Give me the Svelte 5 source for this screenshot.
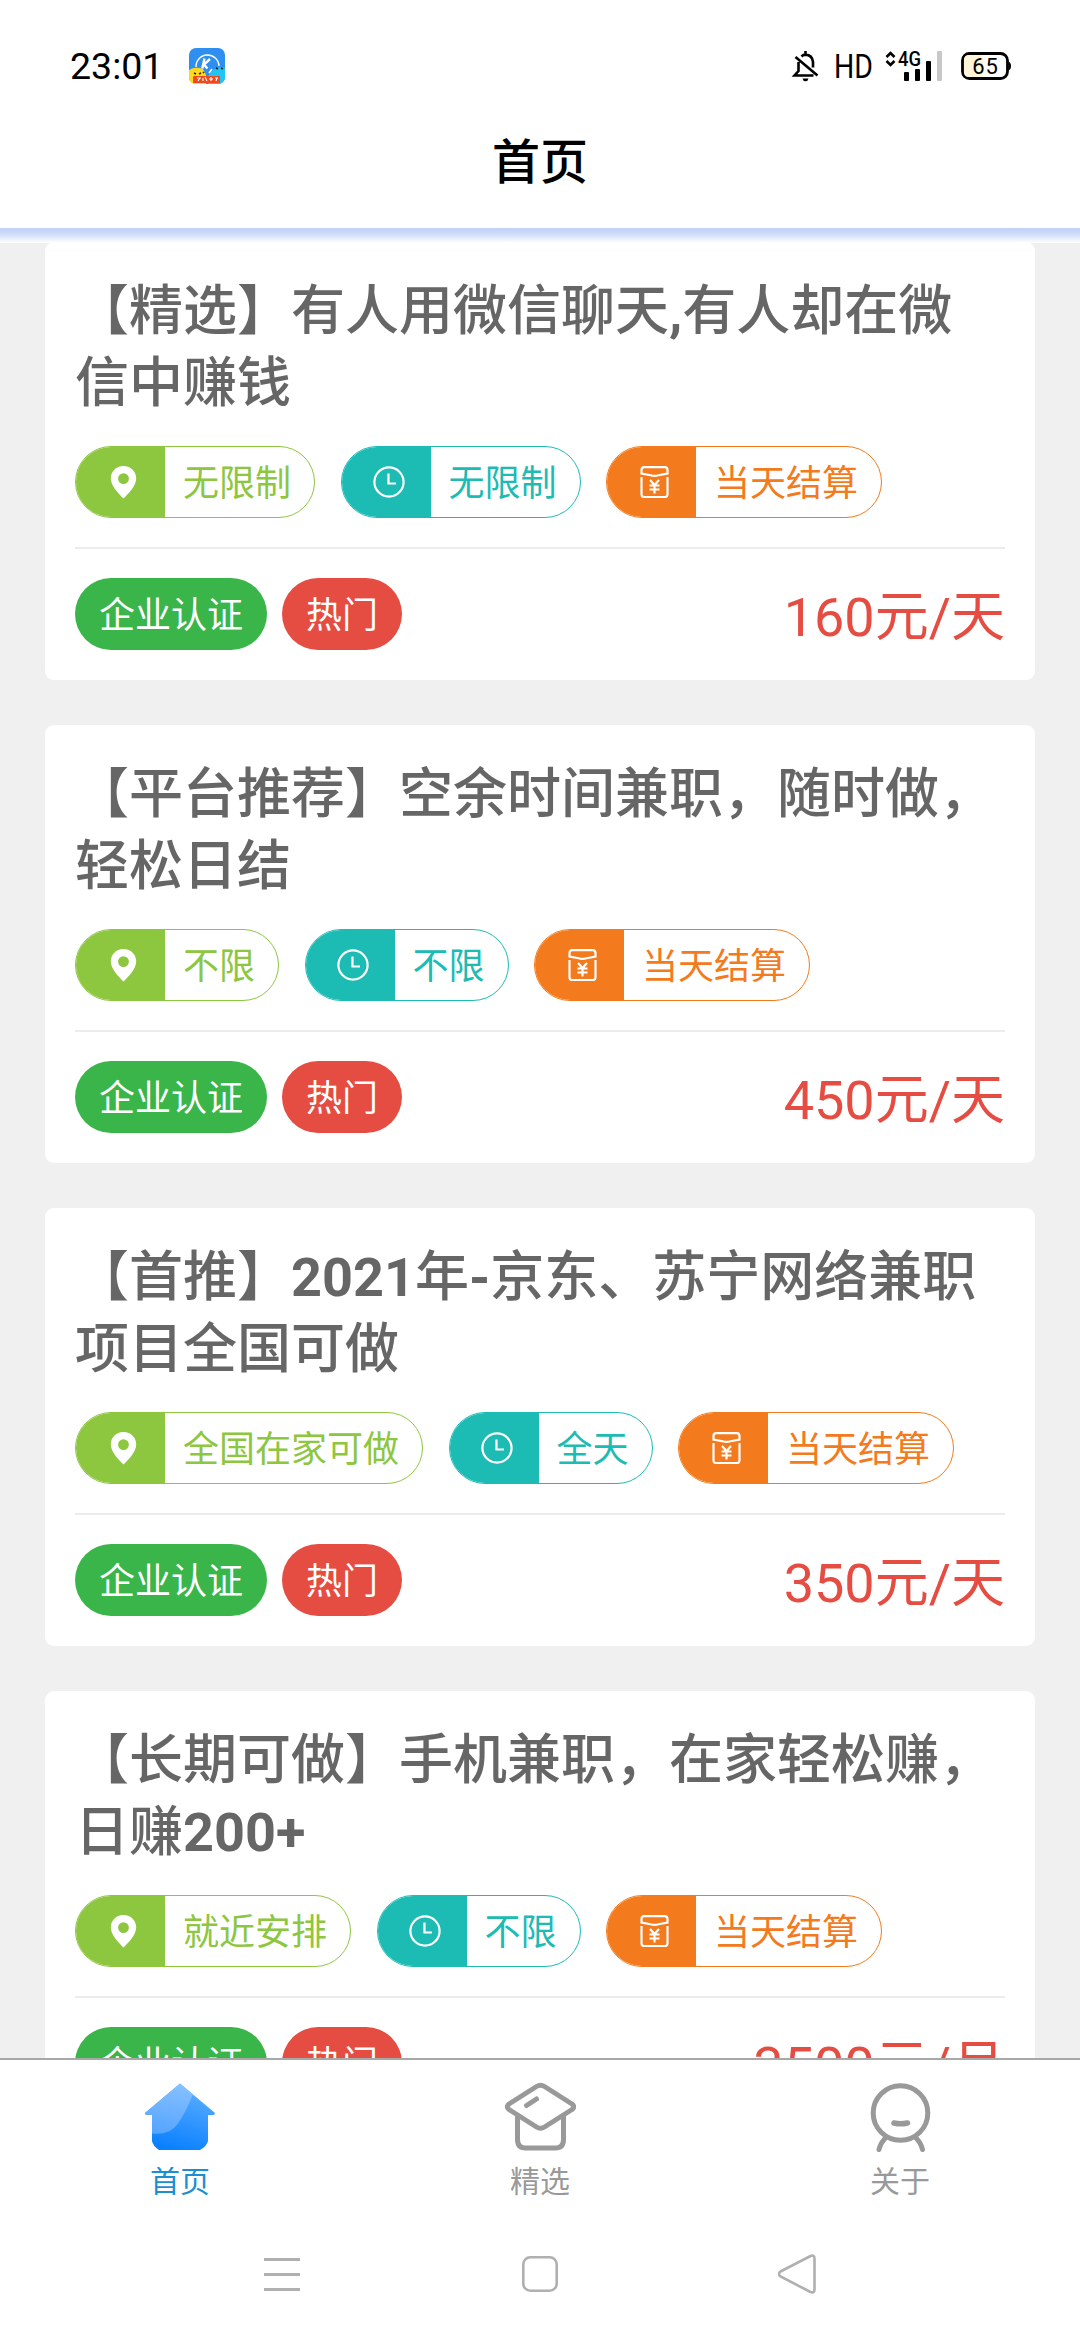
<script>
	const jobs = [
		{
			title: '【精选】有人用微信聊天,有人却在微\n信中赚钱',
			place: '无限制',
			time: '无限制',
			settle: '当天结算',
			price: '160元/天'
		},
		{
			title: '【平台推荐】空余时间兼职，随时做，\n轻松日结',
			place: '不限',
			time: '不限',
			settle: '当天结算',
			price: '450元/天'
		},
		{
			title: '【首推】2021年-京东、苏宁网络兼职\n项目全国可做',
			place: '全国在家可做',
			time: '全天',
			settle: '当天结算',
			price: '350元/天'
		},
		{
			title: '【长期可做】手机兼职，在家轻松赚，\n日赚200+',
			place: '就近安排',
			time: '不限',
			settle: '当天结算',
			price: '3500元/月'
		}
	];

	const tabs = [
		{ id: 'home', name: '首页' },
		{ id: 'pick', name: '精选' },
		{ id: 'about', name: '关于' }
	];

	let active = $state('home');

	// latin runs are set bolder than the chinese text around them
	function split(title) {
		return title.split(/([!-~]+)/);
	}
</script>

<div class="screen">
	<div class="status">
		<span class="clock">23:01</span>
		<svg class="app" width="36" height="36" viewBox="0 0 36 36">
			<defs>
				<clipPath id="app-clip"><rect width="36" height="36" rx="7" /></clipPath>
			</defs>
			<g clip-path="url(#app-clip)">
				<rect width="36" height="36" fill="#2f8ff0" />
				<path d="M7 19a11.5 11.5 0 1 1 23-1" fill="none" stroke="#fff" stroke-width="1.4" />
				<path d="M0 22q6-4 14-1l3 6v9H0z" fill="#ffd91c" />
				<path d="M36 20q-7-2-12 2l-5 6v8h17z" fill="#21c5f5" />
				<path d="M15.5 10.5l-2.2 10M21 11l-6 5.5 3.500 4" fill="none" stroke="#fff" stroke-width="2.4" />
				<path d="M20 25l3-4" stroke="#fff" stroke-width="1.6" />
				<path d="M5 25l2 1M10 26l2-1M14 24l1 1M27 20l2 1M32 20l2 1" stroke="#222" stroke-width="1.6" />
				<rect x="4" y="28" width="27" height="7" rx="1" fill="#ef4a1c" />
				<path d="M8 30h4M9 33l2-3M14 30v3M16 29l2 4M20 31h4M22 29v4M26 30h3M27 33l1-3" stroke="#fff" stroke-width="1.1" />
			</g>
		</svg>
		<svg class="signals" width="220" height="36" viewBox="792 48 220 36">
			<path
				d="M798.5 62v9l-4 4.500h19M801.500 56.500q1.800-1.900 4-1.900 6.700.3 7.500 7.400v5.500M795.500 57l22 18.500M805.500 51v4"
				fill="none"
				stroke="#000"
				stroke-width="2.6"
			/>
			<path d="M802.5 78.500h6q-.6 2.800-3 2.800t-3-2.800z" />
			<text x="834" y="78" class="hd" textLength="39" lengthAdjust="spacingAndGlyphs">HD</text>
			<path d="M886.5 57l4-4 4 4M886.500 61l4 4 4-4" fill="none" stroke="#000" stroke-width="2.6" />
			<text x="898" y="65.5" class="net" textLength="23" lengthAdjust="spacingAndGlyphs">4G</text>
			<rect x="904" y="72" width="5" height="9" rx="1" />
			<rect x="915" y="69" width="5" height="12" rx="1" />
			<rect x="926" y="61" width="5" height="20" rx="1" />
			<rect x="937" y="51" width="5" height="30" rx="1" fill="#c8c8c8" />
			<rect x="962.5" y="53.5" width="45" height="25" rx="7" fill="#fff" stroke="#000" stroke-width="2.8" />
			<path d="M969 55h14v22h-14q-5 0-5-5v-12q0-5 5-5z" fill="#fff5d8" />
			<path d="M1008.5 61.500q2.500 1 2.500 4.500t-2.500 4.500z" />
			<text x="985.5" y="73.5" class="level">65</text>
		</svg>
	</div>

	<header>首页</header>

	<main>
		{#each jobs as job}
			<article>
				<h2>{#each split(job.title) as part, i}{#if i % 2}<b>{part}</b>{:else}{part}{/if}{/each}</h2>
				<div class="tags">
					<div class="tag place">
						<i>
							<svg width="27" height="33" viewBox="0 0 27 33">
								<path
									fill="#fff"
									fill-rule="evenodd"
									d="M13.5 0C6 0 .8 5.500.8 12.500.8 20 9 28 13.500 32.500 18 28 26.200 20 26.200 12.500 26.200 5.500 21 0 13.500 0zm0 7.200a5.400 5.400 0 1 1 0 10.800 5.400 5.400 0 0 1 0-10.800z"
								/>
							</svg>
						</i>
						<span>{job.place}</span>
					</div>
					<div class="tag time">
						<i>
							<svg width="32" height="32" viewBox="0 0 32 32" fill="none" stroke="#fff" stroke-width="2.2">
								<circle cx="16" cy="16" r="14.6" />
								<path d="M15.5 7.500v10h7.500" />
							</svg>
						</i>
						<span>{job.time}</span>
					</div>
					<div class="tag settle">
						<i>
							<svg width="29" height="32" viewBox="0 0 29 32" fill="none" stroke="#fff" stroke-width="2.2">
								<path d="M1.5 11v17.500q0 2.500 2.500 2.500h21q2.500 0 2.500-2.500V11" />
								<path d="M1.5 7.500V4q0-2.800 2.800-2.800h20.400q2.800 0 2.800 2.800v3.500l-9 1.700q-4 1.200-8 0z" />
								<path d="M10 14l4.500 5 4.500-5M14.500 19v8.500M9.500 19.500h10M9.500 23.500h10" />
							</svg>
						</i>
						<span>{job.settle}</span>
					</div>
				</div>
				<div class="foot">
					<span class="badge verified">企业认证</span>
					<span class="badge hot">热门</span>
					<span class="price">{job.price}</span>
				</div>
			</article>
		{/each}
	</main>

	<nav>
		{#each tabs as tab}
			<button class:active={active === tab.id} onclick={() => (active = tab.id)}>
				<svg width="72" height="70" viewBox="0 0 72 70" fill="none" stroke="#999" stroke-width="5" stroke-linejoin="round" stroke-linecap="round">
					{#if tab.id === 'home'}
						<defs>
							<linearGradient id="house" x1=".7" y1="0" x2=".4" y2="1">
								<stop offset="0" stop-color="#5fb0ff" />
								<stop offset="1" stop-color="#0a80ff" />
							</linearGradient>
							<linearGradient id="shine" x1=".6" y1="0" x2=".4" y2="1">
								<stop offset="0" stop-color="#86c0ff" />
								<stop offset="1" stop-color="#55a5ff" />
							</linearGradient>
						</defs>
						<path d="M36 1.500l35 29.500q0 2-2 2h-5v26q-1 5-8 9H15q-6-4-7-9V33H3q-2 0-2-2z" fill="url(#house)" stroke="none" />
						<path d="M36 1.500l13 11q-8 19-15 29-8 12-26 10V33H3q-2 0-2-2z" fill="url(#shine)" stroke="none" />
					{:else if tab.id === 'pick'}
						<path d="M32.5 4.500q4-2.500 8 0l27.500 17.500q3.500 2.700 0 5.500l-27.500 17.500q-4 2.500-8 0L5 27.500q-3.500-2.800 0-5.500z" />
						<path d="M13.5 34v23.500q0 8.500 8 8.500h30q8 0 8-8.500V34M22.500 23.500l10-6.500" />
					{:else}
						<circle cx="36.5" cy="31" r="27.3" />
						<path d="M30 41q6.500 1.700 13.500 0" stroke-width="5.5" />
						<path d="M21.5 56q-5 5-6.500 11.500M52 56q5 5 6.500 11.500" />
					{/if}
				</svg>
				<span>{tab.name}</span>
			</button>
		{/each}
	</nav>

	<div class="keys">
		<svg width="40" height="44" viewBox="0 0 40 44" fill="none" stroke="#b0b0b0" stroke-width="3">
			<path d="M2 7.500h36M2 22.500h36M2 37.500h36" />
		</svg>
		<svg width="40" height="44" viewBox="0 0 40 44" fill="none" stroke="#b0b0b0" stroke-width="2.6">
			<rect x="3.3" y="5.3" width="33.4" height="33.4" rx="7" />
		</svg>
		<svg width="40" height="44" viewBox="0 0 40 44" fill="none" stroke="#b0b0b0" stroke-width="2.6">
			<path d="M2.5 19.500L32.500 4q4-1.500 4 2.500v31q0 4-4 2.500L2.500 24.500q-3-2.500 0-5z" />
		</svg>
	</div>
</div>

<style>
	:global(body) {
		background: #fff;
	}

	.screen {
		display: flex;
		flex-direction: column;
		width: 1080px;
		height: 2340px;
		overflow: hidden;
		background: #fff;
		font-family: Roboto, 'Noto Sans CJK SC', sans-serif;
		text-spacing-trim: space-all;
	}

	.status {
		display: flex;
		align-items: center;
		height: 36px;
		padding: 48px 68px 0 70px;
	}

	.clock {
		width: 119px;
		font-size: 37.5px;
		line-height: 38px;
	}

	.signals {
		margin-left: auto;
		overflow: visible;
	}

	.hd {
		font-size: 33px;
	}

	.net {
		font-size: 20px;
		font-weight: 500;
	}

	.level {
		font-size: 22px;
		text-anchor: middle;
		letter-spacing: 1px;
	}

	header {
		flex: none;
		height: 144px;
		line-height: 157px;
		font-size: 48px;
		font-weight: 500;
		text-align: center;
	}

	main {
		position: relative;
		flex: none;
		display: flex;
		flex-direction: column;
		gap: 45px;
		box-sizing: border-box;
		height: 1830px;
		padding: 14px 45px 0;
		overflow: hidden;
		background: #f0f0f0;
	}

	/* shadow that the header throws over the list */
	main::before {
		content: '';
		position: absolute;
		top: 0;
		left: 0;
		right: 0;
		height: 15px;
		background: linear-gradient(#c3d1f7, #cbdaf8 35%, #fff);
	}

	article {
		flex: none;
		box-sizing: border-box;
		height: 438px;
		padding: 34px 30px 30px;
		background: #fff;
		border-radius: 9px;
	}

	h2 {
		height: 144px;
		margin: 0 0 26px;
		font-size: 54px;
		font-weight: 500;
		line-height: 72px;
		white-space: pre;
		color: #666;
	}

	h2 b {
		font-weight: 700;
	}

	.tags {
		display: flex;
		gap: 25.5px;
		padding-bottom: 29px;
		border-bottom: 2px solid #ececec;
	}

	.tag {
		--c: #8dc63f;
		display: flex;
		box-sizing: border-box;
		height: 72px;
		border: 1.5px solid var(--c);
		border-radius: 36px;
		overflow: hidden;
		color: var(--c);
		font-size: 36px;
		line-height: 74px;
	}

	.time {
		--c: #1cbbb4;
	}

	.settle {
		--c: #f37b1d;
	}

	.tag i {
		display: flex;
		align-items: center;
		justify-content: center;
		width: 89px;
		height: 70px;
		padding-left: 6px;
		box-sizing: border-box;
		background: var(--c);
	}

	.tag span {
		padding: 0 23px 0 18px;
	}

	.foot {
		display: flex;
		gap: 15px;
		padding-top: 29px;
	}

	.badge {
		height: 72px;
		padding: 0 24px;
		border-radius: 36px;
		font-size: 36px;
		line-height: 77px;
		color: #fff;
	}

	.verified {
		background: #39b54a;
	}

	.hot {
		background: #e54d42;
	}

	.price {
		margin-left: auto;
		font-size: 54px;
		line-height: 80px;
		color: #e54d42;
	}

	nav {
		flex: none;
		display: flex;
		box-sizing: border-box;
		height: 150px;
		border-top: 2px solid #a8a8a8;
	}

	button {
		flex: 1;
		display: flex;
		flex-direction: column;
		justify-content: flex-start;
		align-items: center;
		padding: 22px 0 0;
		border: 0;
		background: none;
		font: inherit;
		font-size: 30px;
		line-height: 56px;
		color: #999;
	}

	button svg {
		flex: none;
		margin-bottom: 2px;
	}

	button.active {
		color: #1a8fd1;
	}

	.keys {
		display: flex;
		gap: 218px;
		justify-content: center;
		padding-top: 44px;
	}
</style>
